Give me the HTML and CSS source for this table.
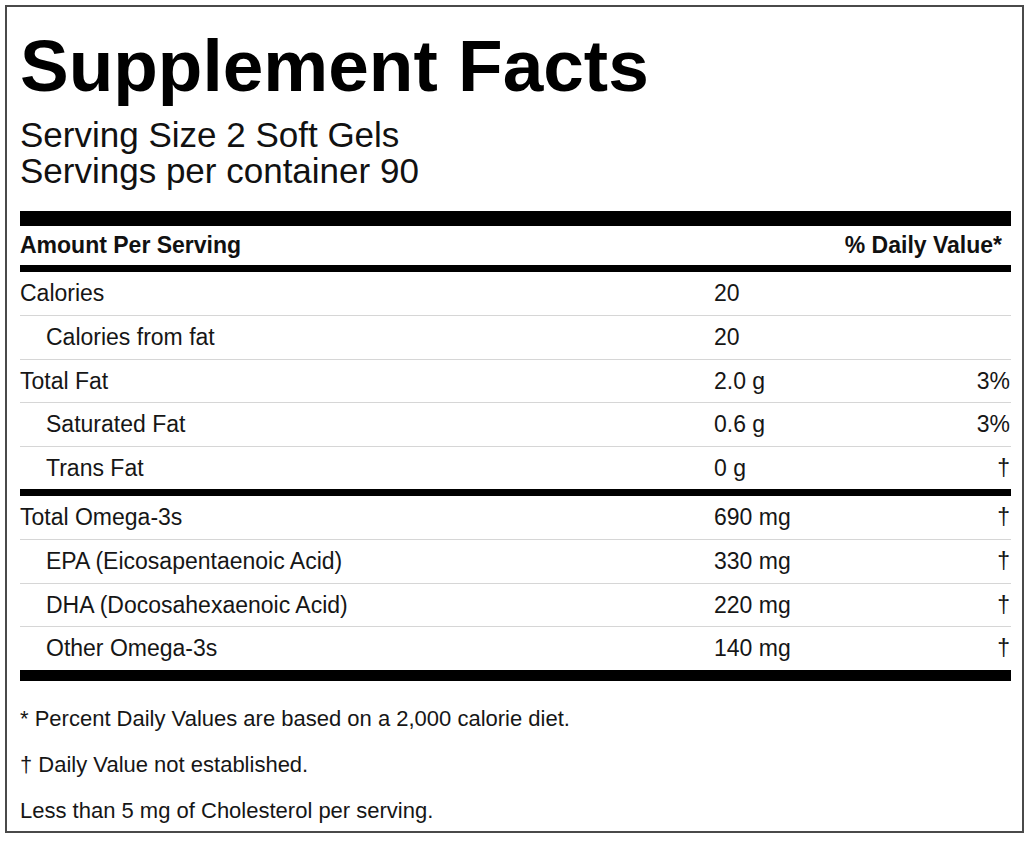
FILE: index.html
```html
<!DOCTYPE html>
<html lang="en">
<head>
<meta charset="utf-8">
<title>Supplement Facts</title>
<link rel="stylesheet" href="styles.css">
</head>
<body>
<section class="label">
  <h1 class="title">Supplement Facts</h1>
  <div class="serving">
    <div>Serving Size 2 Soft Gels</div>
    <div>Servings per container 90</div>
  </div>
  <div class="bar bar-xl"></div>
  <div class="head">
    <span>Amount Per Serving</span>
    <span class="head-dv">% Daily Value*</span>
  </div>
  <div class="bar bar-md"></div>
  <div class="group">
    <div class="row"><span class="name">Calories</span><span class="amt">20</span><span class="dv"></span></div>
    <div class="row"><span class="name sub">Calories from fat</span><span class="amt">20</span><span class="dv"></span></div>
    <div class="row"><span class="name">Total Fat</span><span class="amt">2.0 g</span><span class="dv">3%</span></div>
    <div class="row"><span class="name sub">Saturated Fat</span><span class="amt">0.6 g</span><span class="dv">3%</span></div>
    <div class="row"><span class="name sub">Trans Fat</span><span class="amt">0 g</span><span class="dv">†</span></div>
  </div>
  <div class="bar bar-md"></div>
  <div class="group">
    <div class="row"><span class="name">Total Omega-3s</span><span class="amt">690 mg</span><span class="dv">†</span></div>
    <div class="row"><span class="name sub">EPA (Eicosapentaenoic Acid)</span><span class="amt">330 mg</span><span class="dv">†</span></div>
    <div class="row"><span class="name sub">DHA (Docosahexaenoic Acid)</span><span class="amt">220 mg</span><span class="dv">†</span></div>
    <div class="row"><span class="name sub">Other Omega-3s</span><span class="amt">140 mg</span><span class="dv">†</span></div>
  </div>
  <div class="bar bar-lg"></div>
  <div class="notes">
    <p>* Percent Daily Values are based on a 2,000 calorie diet.</p>
    <p>† Daily Value not established.</p>
    <p>Less than 5 mg of Cholesterol per serving.</p>
  </div>
</section>
</body>
</html>
```
FILE: styles.css
```css
html, body {
  margin: 0;
  padding: 0;
  background: #fff;
}

body {
  font-family: "Liberation Sans", Arial, Helvetica, sans-serif;
  color: #111;
}

.label {
  box-sizing: border-box;
  width: 1019px;
  height: 828px;
  margin: 5px 0 0 5px;
  border: 2px solid #4a4a4a;
  padding: 22px 11px 0 13px;
  overflow: visible;
}

.title {
  margin: 0;
  font-size: 73px;
  line-height: 73px;
  font-weight: 700;
  color: #000;
}

.serving {
  margin-top: 15px;
  font-size: 35px;
  line-height: 36px;
  color: #111;
}

.bar {
  background: #000;
}

.bar-xl {
  margin-top: 22px;
  height: 15px;
}

.bar-md {
  height: 7px;
}

.bar-lg {
  height: 11px;
}

.head {
  display: flex;
  justify-content: space-between;
  height: 39px;
  line-height: 39px;
  font-size: 23px;
  font-weight: 700;
  color: #111;
}

.head-dv {
  padding-right: 9px;
}

.group {
  display: flex;
  flex-direction: column;
}

.row {
  display: grid;
  grid-template-columns: 694px 1fr auto;
  box-sizing: border-box;
  height: 43.4px;
  line-height: 42.4px;
  font-size: 23px;
  color: #161616;
  border-top: 1px solid #d6d6d6;
}

.row:first-child {
  border-top: none;
  line-height: 43.4px;
}

.name.sub {
  padding-left: 26px;
}

.dv {
  text-align: right;
  padding-right: 1px;
}

.notes {
  margin-top: 15px;
  font-size: 22px;
  line-height: 46px;
  color: #161616;
}

.notes p {
  margin: 0;
}
```
